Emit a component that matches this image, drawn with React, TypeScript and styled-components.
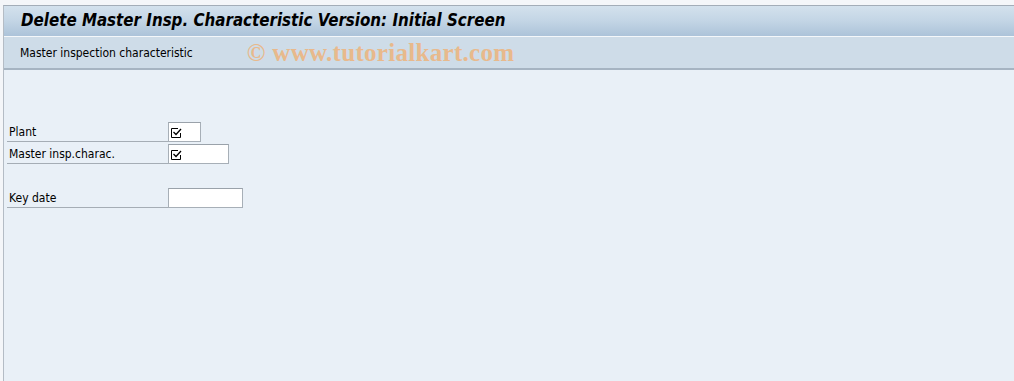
import React from "react";
import styled, { createGlobalStyle } from "styled-components";

const Global = createGlobalStyle`
  html, body { margin: 0; padding: 0; background: #f4f6f9; }
  body { width: 1014px; height: 381px; overflow: hidden; }
  #root { height: 381px; }
`;

const Frame = styled.div`
  box-sizing: border-box;
  height: 376px;
  margin-top: 5px;
  margin-left: 3px;
  border-top: 1px solid #a3adb8;
  border-left: 1px solid #b4bcc5;
  display: flex;
  flex-direction: column;
  background: #e9f0f7;
`;

const TitleBar = styled.div`
  box-sizing: border-box;
  height: 31px;
  padding-left: 17px;
  padding-bottom: 2px;
  display: flex;
  align-items: center;
  background: linear-gradient(to bottom, #d3e1ed 0%, #c3d5e5 50%, #acc3d9 100%);
  border-bottom: 1px solid #f4f7fa;
`;

const Title = styled.h1`
  margin: 0;
  font-family: "DejaVu Sans", "Liberation Sans", sans-serif;
  font-stretch: condensed;
  font-style: italic;
  font-weight: bold;
  font-size: 16.8px;
  color: #000;
`;

const Toolbar = styled.div`
  box-sizing: border-box;
  height: 33px;
  padding-left: 16px;
  display: flex;
  align-items: center;
  background: #cedce8;
  border-bottom: 2px solid #a6b4c2;
`;

const ToolText = styled.span`
  font-family: "DejaVu Sans", sans-serif;
  font-stretch: condensed;
  font-size: 12px;
  color: #000;
`;

const Watermark = styled.span`
  margin-left: 54px;
  font-family: "Liberation Serif", serif;
  font-weight: bold;
  font-size: 25px;
  letter-spacing: 0.3px;
  color: #e8b98c;
  margin-top: 1px;
`;

const Main = styled.div`
  flex: 1;
  padding: 52px 0 0 3px;
  display: flex;
  flex-direction: column;
`;

const Row = styled.div<{ $gap?: number }>`
  display: flex;
  align-items: stretch;
  height: 20px;
  margin-top: ${(p) => p.$gap ?? 0}px;
`;

const Label = styled.div`
  box-sizing: border-box;
  width: 161px;
  padding-left: 2px;
  border-bottom: 1px solid #a5adb5;
  display: flex;
  align-items: center;
  font-family: "DejaVu Sans", sans-serif;
  font-stretch: condensed;
  font-size: 12px;
  color: #000;
`;

const Input = styled.div<{ $w: number }>`
  box-sizing: border-box;
  width: ${(p) => p.$w}px;
  height: 20px;
  background: #fff;
  border: 1px solid #a7afb7;
  border-top-color: #9aa2aa;
  display: flex;
  align-items: center;
  padding-left: 2px;
`;

const Check = () => (
  <svg width="11" height="11" viewBox="0 0 11 11" style={{ display: "block" }}>
    <path d="M7 1.5 H0.5 V10.5 H9.5 V6" fill="none" stroke="#000" strokeWidth="1" />
    <path d="M2.5 5 L5 7.5 L10 2" fill="none" stroke="#000" strokeWidth="1.3" />
  </svg>
);

export default function App() {
  return (
    <>
      <Global />
      <Frame>
        <TitleBar>
          <Title>Delete Master Insp. Characteristic Version: Initial Screen</Title>
        </TitleBar>
        <Toolbar>
          <ToolText>Master inspection characteristic</ToolText>
          <Watermark>© www.tutorialkart.com</Watermark>
        </Toolbar>
        <Main>
          <Row>
            <Label>Plant</Label>
            <Input $w={33}><Check /></Input>
          </Row>
          <Row $gap={2}>
            <Label>Master insp.charac.</Label>
            <Input $w={61}><Check /></Input>
          </Row>
          <Row $gap={24}>
            <Label>Key date</Label>
            <Input $w={75} />
          </Row>
        </Main>
      </Frame>
    </>
  );
}
